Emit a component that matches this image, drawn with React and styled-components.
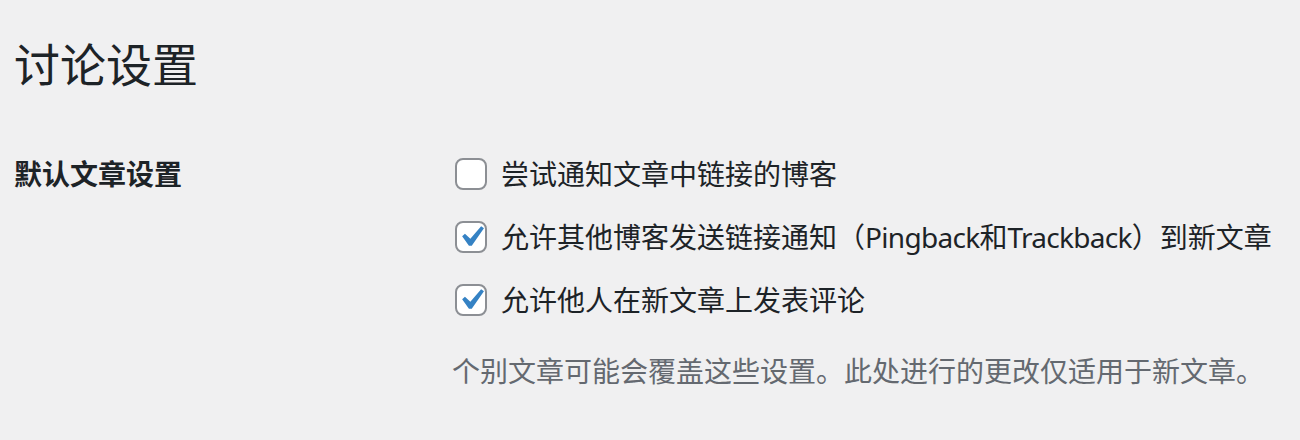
import React from 'react';
import styled, { createGlobalStyle } from 'styled-components';

const GlobalStyle = createGlobalStyle`
  html, body { margin: 0; padding: 0; background: #f0f0f1; }
  body {
    font-family: "Noto Sans", "Noto Sans CJK SC", sans-serif;
    color: #1d2327;
  }
`;

const Page = styled.div`
  padding: 30px 0 0 14px;
`;

const Title = styled.h1`
  margin: 0;
  font-size: 46px;
  font-weight: 400;
  line-height: 68px;
  color: #1d2327;
`;

const Row = styled.div`
  display: flex;
  margin-top: 42px;
`;

const Label = styled.div`
  width: 441px;
  flex: none;
  font-size: 28px;
  font-weight: 700;
  line-height: 40px;
  padding-top: 14px;
`;

const Options = styled.div`
  display: flex;
  flex-direction: column;
  gap: 23px;
  padding-top: 14px;
`;

const Option = styled.label`
  display: flex;
  align-items: center;
  gap: 14px;
  font-size: 28px;
  line-height: 40px;
  color: #1d2327;
`;

const Latin = styled.span`
  letter-spacing: -0.7px;
`;

const Box = styled.span`
  width: 32px;
  height: 32px;
  box-sizing: border-box;
  border: 2px solid #8c8f94;
  border-radius: 8px;
  background: #fff;
  display: flex;
  align-items: center;
  justify-content: center;
  flex: none;
  overflow: visible;

  svg { flex: none; margin: -6px; }
`;

const Note = styled.p`
  margin: 8px 0 0 -3px;
  font-size: 28px;
  line-height: 40px;
  color: #646970;
`;

const Check = ({ checked }) => (
  <Box>
    {checked && (
      <svg width="42" height="42" viewBox="0 0 20 20">
        <path d="M14.83 4.89l1.34.94-5.81 8.38H9.02L5.78 9.67l1.34-1.25 2.57 2.4z" fill="#3582c4" />
      </svg>
    )}
  </Box>
);

export default function App() {
  return (
    <>
      <GlobalStyle />
      <Page>
        <Title>讨论设置</Title>
        <Row>
          <Label>默认文章设置</Label>
          <Options>
            <Option><Check />尝试通知文章中链接的博客</Option>
            <Option>
              <Check checked />
              <span>允许其他博客发送链接通知（<Latin>Pingback</Latin>和<Latin>Trackback</Latin>）到新文章</span>
            </Option>
            <Option><Check checked />允许他人在新文章上发表评论</Option>
            <Note>个别文章可能会覆盖这些设置。此处进行的更改仅适用于新文章。</Note>
          </Options>
        </Row>
      </Page>
    </>
  );
}
